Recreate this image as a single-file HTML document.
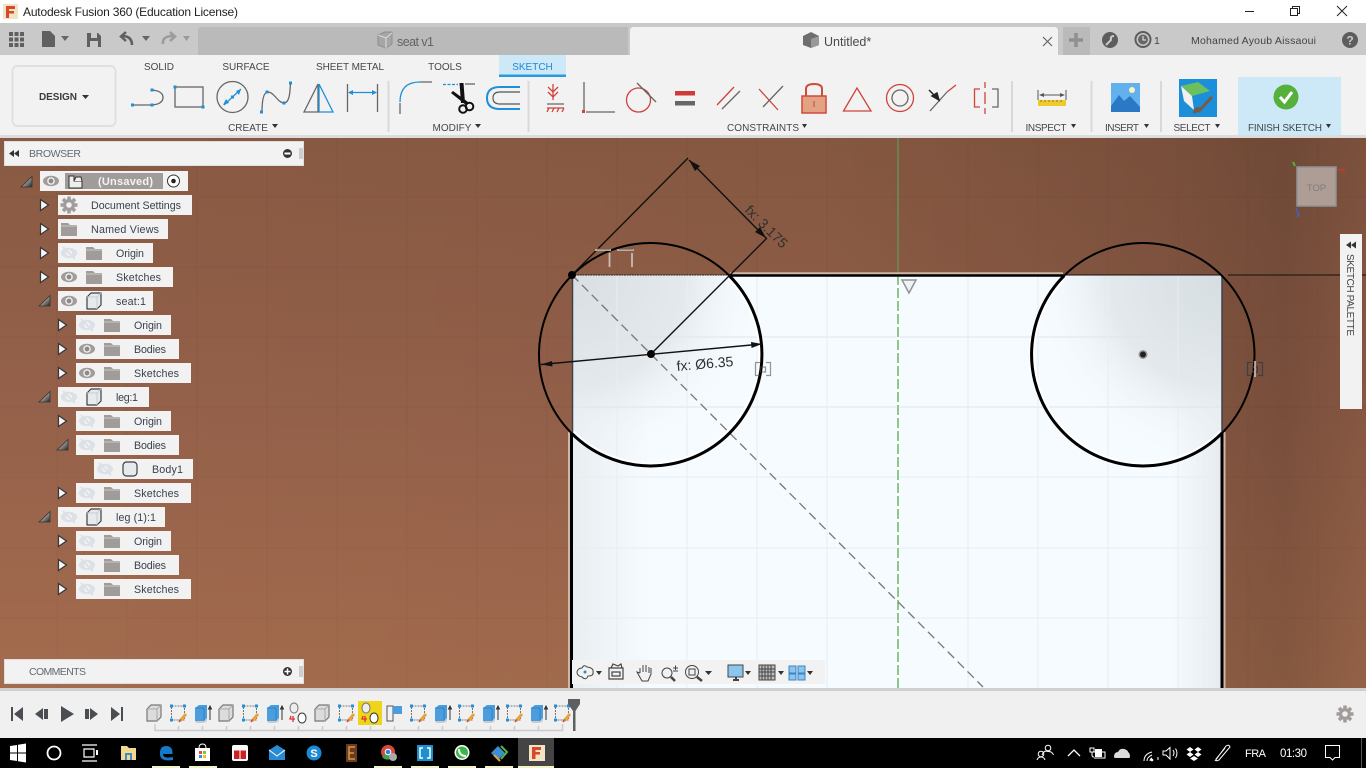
<!DOCTYPE html>
<html><head><meta charset="utf-8"><title>Autodesk Fusion 360 (Education License)</title>
<style>
html,body{margin:0;padding:0;width:1366px;height:768px;overflow:hidden;background:#fff}
svg{display:block}
text{font-family:"Liberation Sans",sans-serif;fill:#3d4145;font-size:11px}
.l{font-size:10px;fill:#44484c;text-anchor:middle}
.b{font-size:10.7px;fill:#37434f}
.t{fill:#fff;font-size:12px}
</style></head><body>
<svg width="1366" height="768" viewBox="0 0 1366 768" xmlns="http://www.w3.org/2000/svg">
<defs>
<linearGradient id="bgV" x1="0" y1="0" x2="0" y2="1"><stop offset="0" stop-color="#895a43"/><stop offset=".5" stop-color="#95614a"/><stop offset="1" stop-color="#a46c4e"/></linearGradient>
<linearGradient id="bgH" x1="0" y1="0" x2="1" y2="0"><stop offset="0" stop-color="#000" stop-opacity="0"/><stop offset=".6" stop-color="#000" stop-opacity=".03"/><stop offset=".85" stop-color="#000" stop-opacity=".12"/><stop offset=".94" stop-color="#000" stop-opacity=".19"/><stop offset="1" stop-color="#000" stop-opacity=".1"/></linearGradient>
<linearGradient id="plate" x1="0" y1="0" x2="1" y2="0"><stop offset="0" stop-color="#e9eef1"/><stop offset=".12" stop-color="#f5fbff"/><stop offset=".92" stop-color="#f6fbff"/><stop offset="1" stop-color="#e6ebef"/></linearGradient>
<radialGradient id="tl" gradientUnits="userSpaceOnUse" cx="572" cy="275" r="190"><stop offset="0" stop-color="#d8dee2"/><stop offset=".6" stop-color="#e3e9ec"/><stop offset="1" stop-color="#f3f9fd" stop-opacity="0"/></radialGradient>
<radialGradient id="tr" gradientUnits="userSpaceOnUse" cx="1222" cy="275" r="190"><stop offset="0" stop-color="#d6dde1"/><stop offset=".6" stop-color="#e3e9ec"/><stop offset="1" stop-color="#f3f9fd" stop-opacity="0"/></radialGradient>
<clipPath id="pc"><rect x="572" y="275" width="650" height="413"/></clipPath>
<linearGradient id="tg" x1="0" y1="0" x2="1" y2="1"><stop offset="0" stop-color="#fff"/><stop offset=".5" stop-color="#999"/><stop offset="1" stop-color="#222"/></linearGradient>

<g id="eye"><ellipse rx="8" ry="5.200" fill="#a09c9a"/><circle r="3.800" fill="#f2f2f2"/><circle r="2.400" fill="#8d8a88"/></g>
<g id="eyeoff"><ellipse rx="8" ry="5.200" fill="#dbe1e6"/><circle r="3" fill="#f2f2f2"/><path d="M-6-6 6 6" stroke="#dbe1e6" stroke-width="2"/></g>
<g id="folder"><path d="M-8-6H-1L1-4H8V7H-8Z" fill="#a09c9a"/><path d="M-8-3H8" stroke="#d6d4d3" stroke-width=".8"/></g>
<g id="ra"><path d="M-4-5.500 4 0-4 5.500Z" fill="#f8f8f8" stroke="#33363a" stroke-width="1.200"/></g>
<path id="oa" d="M-5.500 5 5.500-5.500V5Z" fill="url(#tg)" stroke="#333" stroke-width=".8"/>
<g id="cube"><path d="M-7-4-3-8H7V4L3 8H-7Z" fill="#e6eaed" stroke="#3c4146" stroke-width="1.200" stroke-linejoin="round"/><path d="M-7-4H3V8M3-4 7-8" fill="none" stroke="#c7ccd0" stroke-width="1"/></g>
<g id="tcube"><path d="M-7-4-3-8H7V4L3 8H-7Z" fill="#dcdcdc" stroke="#777" stroke-width="1.200"/><path d="M-7-4H3V8M3-4 7-8" fill="none" stroke="#aaa"/></g>
<g id="tsk"><rect x="-6.500" y="-7" width="13" height="14" fill="none" stroke="#555" stroke-width=".8" stroke-dasharray="2 1"/><g fill="#1e90d8"><rect x="-8" y="-8.500" width="3" height="3"/><rect x="5" y="-8.500" width="3" height="3"/><rect x="-8" y="5.500" width="3" height="3"/></g><path d="M2 8 8 1" stroke="#e8a33c" stroke-width="3"/><path d="M1 9 2.500 6.500" stroke="#c44" stroke-width="1.500"/></g>
<g id="tex"><path d="M-7-5-3-8H5V5L2 8H-7Z" fill="#4a9edd"/><path d="M-7-5H2V8" fill="none" stroke="#2a78b8" stroke-width=".7"/><path d="M-7 8H2L5 5V8L2 10H-6Z" fill="#ccc"/><path d="M8 7V-6M6.500-4 8-7 9.500-4Z" stroke="#333" fill="#333"/></g>
<g id="tj"><ellipse cx="-4" cy="-5" rx="4" ry="5" fill="#eee" stroke="#777"/><path d="M-7 3-8 6H-3M-5 3V9" stroke="#d33" stroke-width="1.300" fill="none"/><ellipse cx="4" cy="5" rx="4" ry="5" fill="#fff" stroke="#333"/></g>
<g id="gear"><path d="M0-8.500V8.500M-8.500 0H8.500M-6-6 6 6M-6 6 6-6" stroke="#a09c9a" stroke-width="3.500"/><circle r="6" fill="#a09c9a"/><circle r="2.800" fill="#f2f2f2"/></g>
<g id="sym"><path d="M-3-6.500H-7.500V6.500H-3M3-6.500H7.500V6.500H3M-2.500-2H2.500V3H-2.500Z" fill="none" stroke="#3f3f3f" stroke-width="1.200"/></g>
</defs>

<!-- window -->
<rect width="1366" height="768" fill="#fff"/>
<rect x="0" y="23" width="1366" height="32" fill="#c9c9c9"/>
<path d="M198 55V31Q198 27 202 27H628V55Z" fill="#b9bab9"/>
<path d="M630 55V31Q630 27 634 27H1054Q1058 27 1058 31V55Z" fill="#f2f2f2"/>
<path d="M1063 55V27H1090V55Z" fill="#b9bab9"/>
<rect x="0" y="55" width="1366" height="83" fill="#f2f2f2"/>

<!-- title -->
<rect x="3" y="4" width="15" height="15" fill="#f2e2c6"/>
<path d="M6 6H15V9H9V11H14V13.500H9V18H6Z" fill="#d8482b"/>
<text x="23" y="16" textLength="215" style="font-size:12px;fill:#222">Autodesk Fusion 360 (Education License)</text>
<path d="M1245 11.500H1254" stroke="#222"/>
<path d="M1290.500 8.500V15.500H1297.500V8.500ZM1292.500 8.500V6.500H1299.500V13.500H1297.500" fill="none" stroke="#222"/>
<path d="M1337 6 1347 16M1347 6 1337 16" stroke="#222"/>

<!-- toolbar top -->
<path d="M9 32h4v4H9zM14.500 32h4v4h-4zM20 32h4v4h-4zM9 37.500h4v4H9zM14.500 37.500h4v4h-4zM20 37.500h4v4h-4zM9 43h4v4H9zM14.500 43h4v4h-4zM20 43h4v4h-4z" fill="#606060"/>
<path d="M42 31H50L55 36V47H42Z" fill="#606060"/><path d="M61 36H69L65 41Z" fill="#666"/>
<path d="M87 33H98L101 36V47H87ZM91 33V38H97V33ZM90 41V47H98V41Z" fill="#606060" fill-rule="evenodd"/>
<path d="M132 45Q132 36 122 36M126 32 121 36.500 126 41" fill="none" stroke="#606060" stroke-width="2.500"/><path d="M142 36H150L146 41Z" fill="#666"/>
<path d="M163 44Q162 36 173 36M170 32 175 36.500 170 41" fill="none" stroke="#9b9b9b" stroke-width="2.500"/><path d="M183 36H190L186.500 41Z" fill="#999"/>
<path d="M378 35 385 32H392V44L386 48 378 45Z" fill="#a6a6a6" stroke="#8e8e8e"/><path d="M378 35 386 38V48M386 38 392 33" fill="none" stroke="#ddd"/>
<text x="397" y="46" textLength="37" style="font-size:12.500px;fill:#636363">seat v1</text>
<path d="M803 36 811 32 819 36V45L811 48 803 45Z" fill="#6e6e6e"/><path d="M811 39 819 36V45L811 48Z" fill="#999"/>
<text x="824" y="46" style="font-size:12.500px;fill:#4a4a4a">Untitled*</text>
<path d="M1043 37 1052 46M1052 37 1043 46" stroke="#666" stroke-width="1.200"/>
<path d="M1076 33V47M1069 40H1083" stroke="#8f8f8f" stroke-width="3.500"/>
<circle cx="1110" cy="40" r="8" fill="#5d5d5d"/><path d="M1106 45 1111 40Q1110 36 1114 36" stroke="#c9c9c9" stroke-width="2" fill="none"/>
<circle cx="1143" cy="39.500" r="7.500" fill="#c9c9c9" stroke="#5d5d5d" stroke-width="2"/><circle cx="1143" cy="39.500" r="5" fill="#666"/><path d="M1143 36V40H1146" stroke="#eee" fill="none"/>
<text x="1154" y="44" style="font-size:10.500px;fill:#444">1</text>
<text x="1191" y="44" textLength="125" style="font-size:10.500px;fill:#444">Mohamed Ayoub Aissaoui</text>
<circle cx="1350" cy="40" r="8" fill="#5d5d5d"/><text x="1350" y="44.500" text-anchor="middle" style="font-size:12px;font-weight:bold;fill:#c9c9c9">?</text>

<!-- ribbon -->
<rect x="12.500" y="66" width="103" height="60" rx="5" fill="#f2f2f2" stroke="#dde1e4" stroke-width="2"/>
<text x="39" y="100" textLength="38" style="font-size:10px;font-weight:bold;fill:#3c3c3c">DESIGN</text><path d="M82 95H89L85.500 99Z" fill="#333"/>
<text class="l" x="159" y="70">SOLID</text><text class="l" x="246" y="70">SURFACE</text><text class="l" x="350" y="70" textLength="68">SHEET METAL</text><text class="l" x="445" y="70">TOOLS</text>
<rect x="499" y="55" width="67" height="21" fill="#cde9f8"/><rect x="499" y="74.500" width="67" height="2.500" fill="#2a9ae0"/>
<text class="l" x="532.500" y="70" style="fill:#1a8bd6">SKETCH</text>

<g fill="none" stroke="#666" stroke-width="1.300">
<path d="M133 105H152M152 90Q163 91 163 97.500Q163 104 152 105"/>
<rect x="175" y="87" width="28" height="20"/>
<circle cx="232.500" cy="97" r="15.500"/>
<path d="M262 112Q262 92 268 92C274 92 278 103 284 103C290 103 290 90 290.500 83"/>
<path d="M304 112 318 84V112Z"/>
<path d="M347.500 84V112M377.500 84V112"/>
<path d="M420 82H432M400 103V114"/>
<path d="M465 84H475"/>
</g>
<g fill="#1e90d8"><rect x="131" y="103.500" width="3" height="3"/><rect x="150.500" y="103.500" width="3" height="3"/><rect x="150.500" y="88.500" width="3" height="3"/><rect x="173.500" y="85.500" width="3" height="3"/><rect x="201.500" y="105.500" width="3" height="3"/><rect x="231" y="95.500" width="3" height="3"/><rect x="260" y="110.500" width="3" height="3"/><rect x="265.500" y="90.500" width="3" height="3"/><rect x="282.500" y="101.500" width="3" height="3"/><rect x="289" y="81.500" width="3" height="3"/></g>
<g fill="none" stroke="#1e90d8" stroke-width="1.300">
<path d="M224 105 241 89"/>
<path d="M319 84V112H333Z"/>
<path d="M349 92.500H376"/>
<path d="M400 102Q400 82 420 82"/>
<path d="M443 84.500H458" stroke-dasharray="3 1.500"/>
<path d="M520 87H500Q487 87 487 98Q487 109 500 109H520" stroke-width="2"/>
</g>
<path d="M223 105 226 99 229 103ZM241 89 236 91 239 95ZM348 92.500 353 90V95ZM377 92.500 372 90V95Z" fill="#1e90d8"/>
<path d="M520 92H500Q493 92 493 98Q493 104 500 104H520" fill="none" stroke="#555" stroke-width="1.200"/>
<!-- scissors -->
<path d="M459.500 83 463.500 83 465 103 461 103Z" fill="#111"/><path d="M451 93 453 91 468 102 466 105Z" fill="#111"/>
<circle cx="463" cy="109" r="3.800" fill="none" stroke="#111" stroke-width="2"/><circle cx="469.500" cy="106.500" r="3.800" fill="none" stroke="#111" stroke-width="2"/>
<g fill="#d5d9dc"><rect x="387.500" y="81" width="2" height="51"/><rect x="527.500" y="81" width="2" height="51"/><rect x="1011" y="81" width="2" height="51"/><rect x="1090.500" y="81" width="2" height="51"/><rect x="1160" y="81" width="2" height="51"/></g>
<text class="l" x="248" y="131">CREATE</text><path d="M272 124H278L275 128Z" fill="#333"/>
<text class="l" x="452" y="131">MODIFY</text><path d="M475 124H481L478 128Z" fill="#333"/>
<text class="l" x="763" y="131" textLength="72">CONSTRAINTS</text><path d="M802 124H807L804.500 128Z" fill="#333"/>
<text class="l" x="1046" y="131" textLength="41">INSPECT</text><path d="M1071 124H1076L1073.500 128Z" fill="#333"/>
<text class="l" x="1122" y="131" textLength="34">INSERT</text><path d="M1144 124H1149L1146.500 128Z" fill="#333"/>
<text class="l" x="1192" y="131" textLength="37">SELECT</text><path d="M1215 124H1220L1217.500 128Z" fill="#333"/>
<rect x="1238" y="77" width="103" height="59" fill="#cde9f8"/>
<text class="l" x="1285" y="131" textLength="74">FINISH SKETCH</text><path d="M1326 124H1331L1328.500 128Z" fill="#333"/>

<!-- constraints icons -->
<g fill="none" stroke="#d0423a" stroke-width="1.300">
<path d="M553 84V100M548 87 553 92 558 87M548 92 553 97 558 92"/>
<path d="M547 108H564M549 108 547 112M554 108 552 112M559 108 557 112M564 108 562 112"/>
<circle cx="638.500" cy="100" r="12"/>
<path d="M717 105 734 87M759 89 778 110"/>
<path d="M843.500 111 857 88 871 111Z"/>
<circle cx="900" cy="98" r="13.500"/>
<path d="M947 92 956 85"/>
<path d="M980 89H974.500V107H980M985 82V88M985 92V104M985 108V114"/>
</g>
<g fill="none" stroke="#666" stroke-width="1.300">
<path d="M547 104H564"/>
<path d="M584 82V112M586 112H615"/>
<path d="M637 83 656 102"/>
<path d="M722 109 740 91M763 107 783 86"/>
<circle cx="900" cy="98" r="8"/>
<path d="M930 111 947 92"/>
<path d="M992 89H998V107H992"/>
</g>
<rect x="582" y="110" width="3" height="3" fill="#d0423a"/>
<rect x="675" y="91" width="20" height="4.500" fill="#cf3b36"/><rect x="675" y="101" width="20" height="4.500" fill="#666"/>
<rect x="802" y="96" width="24" height="17" fill="#e3a283" stroke="#cf4a3b" stroke-width="1.500"/><path d="M806 96V89Q806 84 814 84Q822 84 822 89V96" fill="none" stroke="#cf4a3b" stroke-width="2"/><path d="M814 101V107" stroke="#c44"/>
<path d="M929 90 937 98M932 96 939 100 937 93Z" stroke="#222" stroke-width="1.500" fill="#222"/>
<path d="M1038 90V100M1066 90V100M1040 95H1064" stroke="#555" fill="none"/><path d="M1039 95 1044 93V97ZM1065 95 1060 93V97Z" fill="#555"/>
<rect x="1038" y="100" width="28" height="6" fill="#eecb2a"/>
<path d="M1041 100v2M1045 100v2M1049 100v2M1053 100v2M1057 100v2M1061 100v2" stroke="#555" stroke-width=".7"/>
<rect x="1111" y="83" width="29" height="29" fill="#62b1ec"/>
<circle cx="1132" cy="90" r="3" fill="#f7f2c8"/><path d="M1111 112V106L1119 95 1124 101 1130 96 1140 107V112Z" fill="#2a78c6"/>
<rect x="1179" y="79" width="38" height="38" fill="#1b8fd9"/>
<path d="M1181 86 1198 82 1210 91 1192 96Z" fill="#6bbf5d"/><path d="M1181 86 1192 96 1194 110 1184 101Z" fill="#f0f0f0"/>
<path d="M1198 112 1212 97" stroke="#7b5a44" stroke-width="3"/><path d="M1193 114Q1193 107 1199 107Q1202 111 1193 114Z" fill="#7b5a44"/>
<circle cx="1286" cy="97" r="12.500" fill="#55b03c"/><path d="M1280 97 1284.500 102 1292 92" fill="none" stroke="#fff" stroke-width="3"/>

<rect x="0" y="135" width="1366" height="3" fill="#dcdcdc"/>

<!-- viewport -->
<rect x="0" y="138" width="1366" height="551" fill="url(#bgV)"/>
<rect x="0" y="138" width="1366" height="551" fill="url(#bgH)"/>
<g stroke="#000" stroke-opacity=".035" fill="none"><path d="M57 138V688M127 138V688M197 138V688M267 138V688M337 138V688M407 138V688M477 138V688M547 138V688M1248 138V688M1318 138V688M617 138V275M687 138V275M757 138V275M827 138V275M968 138V275M1038 138V275M1108 138V275M1178 138V275M0 197H1366M0 267H572M0 337H572M0 407H572M0 477H572M0 548H572M0 618H572M1222 337H1366M1222 407H1366M1222 477H1366M1222 548H1366M1222 618H1366"/></g>

<!-- plate -->
<rect x="572" y="275" width="650" height="413" fill="url(#plate)"/>
<g clip-path="url(#pc)"><circle cx="650.500" cy="354.500" r="111" fill="url(#tl)"/><circle cx="1143" cy="354.500" r="111" fill="url(#tr)"/></g>
<g stroke="#dfe4e8" fill="none"><path d="M572 337H1222M572 407H1222"/></g>
<g stroke="#e8edf1" fill="none"><path d="M617 275V688M687 275V688M757 275V688M827 275V688M968 275V688M1038 275V688M1108 275V688M1178 275V688M572 477H1222M572 548H1222M572 618H1222"/></g>

<!-- center axis -->
<path d="M898 138V275" stroke="#5aa85a" stroke-width="1"/>
<path d="M898 275V688" stroke="#fff" stroke-width="2.500"/>
<path d="M898 275V688" stroke="#66b566" stroke-width="1.500" stroke-dasharray="10 3"/>
<path d="M902 280H916L909 293Z" fill="#eef2f4" stroke="#8e9397" stroke-width="1.500"/>

<!-- construction dash -->
<path d="M572 275 983 687" stroke="#777" stroke-width="1.300" stroke-dasharray="9 5" fill="none"/>

<!-- edges -->
<path d="M730 273.500H1063" stroke="#cdb5a6" stroke-width="2.500"/>
<path d="M730 275.500H1063" stroke="#000" stroke-width="2.500"/>
<path d="M572 275H730" stroke="#222" stroke-width="1" stroke-dasharray="2 .6"/>
<path d="M1063 275H1222M1228 275H1366" stroke="#111" stroke-width="1"/>
<path d="M572.500 275V432M1222 275V432" stroke="#3e4347" stroke-width="1.500"/>
<path d="M569 432V688" stroke="#cfb7a8" stroke-width="2"/>
<path d="M571.500 432V688" stroke="#000" stroke-width="3"/>
<path d="M1224.500 432V688" stroke="#cfb7a8" stroke-width="2"/>
<path d="M1222 432V688" stroke="#000" stroke-width="3"/>

<!-- circles -->
<circle cx="650.500" cy="354.500" r="111.500" fill="none" stroke="#000" stroke-width="2"/>
<path d="M727.900 277.100A100 100 0 0 1 573.100 431.900" fill="none" stroke="#fff" stroke-width="3.500" opacity=".85"/>
<path d="M729.300 275.700A100 100 0 0 1 571.700 433.300" fill="none" stroke="#000" stroke-width="3"/>
<circle cx="1143" cy="354.500" r="111.500" fill="none" stroke="#000" stroke-width="2"/>
<path d="M1220.400 431.900A100 100 0 0 1 1065.600 277.100" fill="none" stroke="#fff" stroke-width="3.500" opacity=".85"/>
<path d="M1221.800 433.300A100 100 0 0 1 1064.200 275.700" fill="none" stroke="#000" stroke-width="3"/>

<!-- dimensions -->
<g fill="none" stroke="#111" stroke-width="1.400">
<path d="M572 275 688 158M730 275 767 238M651 354 730 275M689 160 766 238"/>
<path d="M541 364.500 762 344"/>
</g>
<path d="M689 160 700 166 695 171ZM766 238 755 232 760 227ZM541 364.500 552 361 552.500 366.500ZM762 344 751 342 751.500 348Z" fill="#111"/>
<circle cx="572" cy="275" r="4" fill="#000"/><circle cx="651" cy="354" r="4" fill="#000"/>
<circle cx="1143" cy="354.500" r="4.500" fill="#9a9a9a"/><circle cx="1143" cy="354.500" r="3" fill="#222"/>
<text transform="translate(744 211) rotate(45)" style="font-size:14px;fill:#2f2f2f">fx: 3.175</text>
<text transform="translate(677 371) rotate(-5)" style="font-size:14px;fill:#2f2f2f">fx: Ø6.35</text>
<!-- sketch glyphs -->
<g fill="none" stroke="#b8aba2" stroke-width="2"><path d="M595 250H611M617 250H634"/></g>
<g fill="none" stroke="#6b625c" stroke-width="1"><path d="M597 249H610M619 249H633"/></g>
<g fill="none" stroke="#c9bdb5" stroke-width="1.800"><path d="M609.500 253V267M632 253V267"/></g>
<use href="#sym" x="763" y="369" opacity=".55"/>
<use href="#sym" x="1255" y="369"/><path d="M1255 361V377" stroke="#d8c8be" stroke-width="1.500"/>

<!-- view cube -->
<rect x="1297" y="167" width="39" height="39" fill="#ae9d95" stroke="#8e9298" stroke-width="1.500"/>
<text x="1316.500" y="191" text-anchor="middle" style="font-size:9.500px;fill:#7d7d7d">TOP</text>
<path d="M1295 166 1293 162" stroke="#59b02c" stroke-width="2"/><path d="M1337 170H1342" stroke="#d33"/><path d="M1296 208 1299 216" stroke="#4a5fb0" stroke-width="1.500"/>
<text x="1341" y="173" style="font-size:7px;fill:#d33333">X</text><text x="1296" y="217" style="font-size:7px;fill:#4a5fb0">Z</text>

<!-- palette -->
<rect x="1340" y="234" width="22" height="175" fill="#f2f2f2"/>
<path d="M1346 245 1351 241.500V248.500ZM1351 245 1356 241.500V248.500Z" fill="#333"/>
<text transform="translate(1347 254) rotate(90)" textLength="82" style="font-size:10px;fill:#444">SKETCH PALETTE</text>

<!-- nav bar -->
<rect x="572" y="660" width="253" height="24" fill="#f2f2f2"/>
<g fill="none" stroke="#444" stroke-width="1">
<path d="M577 672Q578 668 582 668Q584 664 587 667Q594 668 593 672Q594 676 588 676Q586 681 582 677Q577 676 577 672Z"/>
<path d="M609 668H623V679H609ZM612 672H620V676H612ZM611 668 613 664 618 666 621 664 622 668" stroke-width="1.200"/>
<path d="M640 673V668M643 672V665M646 672V665M649 673V667M640 673 637 672 642 681H648L651 674V668"/>
<circle cx="667" cy="673" r="5"/><path d="M671 677 675 681" stroke-width="2.500"/><path d="M673 668H678M675.500 665.500V670M673 671H678"/>
<circle cx="692" cy="672" r="6.500"/><rect x="689" y="669" width="6" height="6"/><path d="M697 677 702 681" stroke-width="2.500"/>
<rect x="728" y="665" width="15" height="12" fill="#8cc6ee"/><path d="M733 680H739M736 677V680" stroke-width="2"/>
<rect x="759" y="665" width="16" height="15" fill="#bbb"/><path d="M762 665V680M765 665V680M768 665V680M771 665V680M759 669H775M759 672H775M759 676H775"/>
<g stroke="#3b84c4"><rect x="789" y="666" width="7" height="7" fill="#8cc6ee"/><rect x="798" y="666" width="7" height="7" fill="#8cc6ee"/><rect x="789" y="674" width="7" height="6" fill="#8cc6ee"/><rect x="798" y="674" width="7" height="6" fill="#8cc6ee"/></g>
</g>
<circle cx="585" cy="672" r="1.500" fill="#1e90d8"/>
<g fill="#333"><path d="M596 671H602L599 675ZM705 671H712L708.500 675ZM745 671H751L748 675ZM778 671H784L781 675ZM807 671H813L810 675Z"/></g>

<!-- browser panel -->
<rect x="4.500" y="141.500" width="299" height="24" fill="#f2f2f2" stroke="#dfdfdf"/>
<path d="M9 153.500 14 150V157ZM14 153.500 19 150V157Z" fill="#333"/>
<text x="29" y="157" textLength="52" style="font-size:10.500px;fill:#5f6a74">BROWSER</text>
<circle cx="287.500" cy="153.500" r="4.500" fill="#333"/><rect x="284.500" y="152.500" width="6" height="2" fill="#fff"/>
<path d="M300 148V159M302 148V159" stroke="#aaa"/>

<!-- tree -->
<use href="#oa" x="26.500" y="182"/>
<rect x="40" y="171" width="148" height="20" fill="#f2f2f2"/>
<use href="#eye" x="51" y="181"/>
<rect x="65" y="173" width="98" height="16" fill="#a09c9a"/>
<path d="M69 176H74V181H82V188H69Z" fill="#eee" stroke="#333"/><path d="M74 181 76 177H81L82 181" fill="#eee" stroke="#333"/>
<text x="98" y="185" textLength="55" style="font-size:11px;font-weight:bold;fill:#f4f4f4">(Unsaved)</text>
<circle cx="173.500" cy="181" r="6" fill="#fff" stroke="#333"/><circle cx="173.500" cy="181" r="2.300" fill="#222"/>

<use href="#ra" x="44.500" y="205"/><rect x="58" y="195" width="134" height="20" fill="#f2f2f2"/><use href="#gear" x="69" y="205"/><text class="b" x="91" y="209" textLength="90">Document Settings</text>
<use href="#ra" x="44.500" y="229"/><rect x="58" y="219" width="110" height="20" fill="#f2f2f2"/><use href="#folder" x="69" y="229"/><text class="b" x="91" y="233" textLength="68">Named Views</text>
<use href="#ra" x="44.500" y="253"/><rect x="58" y="243" width="95" height="20" fill="#f2f2f2"/><use href="#eyeoff" x="69" y="253"/><use href="#folder" x="94" y="253"/><text class="b" x="116" y="257" textLength="28">Origin</text>
<use href="#ra" x="44.500" y="277"/><rect x="58" y="267" width="115" height="20" fill="#f2f2f2"/><use href="#eye" x="69" y="277"/><use href="#folder" x="94" y="277"/><text class="b" x="116" y="281" textLength="45">Sketches</text>
<use href="#oa" x="44.500" y="301"/><rect x="58" y="291" width="95" height="20" fill="#f2f2f2"/><use href="#eye" x="69" y="301"/><use href="#cube" x="94" y="301"/><text class="b" x="116" y="305" textLength="30">seat:1</text>
<use href="#ra" x="62.500" y="325"/><rect x="76" y="315" width="95" height="20" fill="#f2f2f2"/><use href="#eyeoff" x="87" y="325"/><use href="#folder" x="112" y="325"/><text class="b" x="134" y="329" textLength="28">Origin</text>
<use href="#ra" x="62.500" y="349"/><rect x="76" y="339" width="103" height="20" fill="#f2f2f2"/><use href="#eye" x="87" y="349"/><use href="#folder" x="112" y="349"/><text class="b" x="134" y="353" textLength="32">Bodies</text>
<use href="#ra" x="62.500" y="373"/><rect x="76" y="363" width="115" height="20" fill="#f2f2f2"/><use href="#eye" x="87" y="373"/><use href="#folder" x="112" y="373"/><text class="b" x="134" y="377" textLength="45">Sketches</text>
<use href="#oa" x="44.500" y="397"/><rect x="58" y="387" width="91" height="20" fill="#f2f2f2"/><use href="#eyeoff" x="69" y="397"/><use href="#cube" x="94" y="397"/><text class="b" x="116" y="401" textLength="22">leg:1</text>
<use href="#ra" x="62.500" y="421"/><rect x="76" y="411" width="95" height="20" fill="#f2f2f2"/><use href="#eyeoff" x="87" y="421"/><use href="#folder" x="112" y="421"/><text class="b" x="134" y="425" textLength="28">Origin</text>
<use href="#oa" x="62.500" y="445"/><rect x="76" y="435" width="103" height="20" fill="#f2f2f2"/><use href="#eyeoff" x="87" y="445"/><use href="#folder" x="112" y="445"/><text class="b" x="134" y="449" textLength="32">Bodies</text>
<rect x="94" y="459" width="99" height="20" fill="#f2f2f2"/><use href="#eyeoff" x="105" y="469"/><rect x="123" y="462" width="14" height="14" rx="3.500" fill="#e6eaed" stroke="#3c4146" stroke-width="1.200"/><text class="b" x="152" y="473" textLength="31">Body1</text>
<use href="#ra" x="62.500" y="493"/><rect x="76" y="483" width="115" height="20" fill="#f2f2f2"/><use href="#eyeoff" x="87" y="493"/><use href="#folder" x="112" y="493"/><text class="b" x="134" y="497" textLength="45">Sketches</text>
<use href="#oa" x="44.500" y="517"/><rect x="58" y="507" width="107" height="20" fill="#f2f2f2"/><use href="#eyeoff" x="69" y="517"/><use href="#cube" x="94" y="517"/><text class="b" x="116" y="521" textLength="40">leg (1):1</text>
<use href="#ra" x="62.500" y="541"/><rect x="76" y="531" width="95" height="20" fill="#f2f2f2"/><use href="#eyeoff" x="87" y="541"/><use href="#folder" x="112" y="541"/><text class="b" x="134" y="545" textLength="28">Origin</text>
<use href="#ra" x="62.500" y="565"/><rect x="76" y="555" width="103" height="20" fill="#f2f2f2"/><use href="#eyeoff" x="87" y="565"/><use href="#folder" x="112" y="565"/><text class="b" x="134" y="569" textLength="32">Bodies</text>
<use href="#ra" x="62.500" y="589"/><rect x="76" y="579" width="115" height="20" fill="#f2f2f2"/><use href="#eyeoff" x="87" y="589"/><use href="#folder" x="112" y="589"/><text class="b" x="134" y="593" textLength="45">Sketches</text>

<!-- comments -->
<rect x="4.500" y="659.500" width="299" height="24" fill="#f2f2f2" stroke="#dfdfdf"/>
<text x="29" y="675" textLength="57" style="font-size:10.500px;fill:#5f6a74">COMMENTS</text>
<circle cx="287.500" cy="671.500" r="4.500" fill="#333"/><path d="M284.500 671.500H290.500M287.500 668.500V674.500" stroke="#fff" stroke-width="1.500"/>
<path d="M300 666V677M302 666V677" stroke="#aaa"/>

<!-- timeline -->
<rect x="0" y="688" width="1366" height="50" fill="#f0f0f0"/>
<rect x="0" y="688" width="1366" height="3" fill="#cfcfcf"/>
<g fill="#4a4d52">
<path d="M11 707H13V721H11ZM14 714 23 707V721Z"/>
<path d="M35 714 43 708V720ZM44 709H48V719H44Z"/>
<path d="M61 706 74 714 61 722Z"/>
<path d="M85 709H89V719H85ZM90 708 98 714 90 720Z"/>
<path d="M111 707 120 714 111 721ZM121 707H123V721H121Z"/>
</g>
<rect x="358" y="701" width="24" height="24" fill="#efd51a"/>
<use href="#tcube" x="154" y="713"/><use href="#tsk" x="178" y="713"/><use href="#tex" x="202" y="713"/><use href="#tcube" x="226" y="713"/><use href="#tsk" x="250" y="713"/><use href="#tex" x="274" y="713"/><use href="#tj" x="298" y="713"/><use href="#tcube" x="322" y="713"/><use href="#tsk" x="346" y="713"/><use href="#tj" x="370" y="713"/>
<rect x="387" y="706" width="6" height="15" fill="#f2f2f2" stroke="#555"/><rect x="393" y="706" width="9" height="8" fill="#4a9edd"/>
<use href="#tsk" x="418" y="713"/><use href="#tex" x="442" y="713"/><use href="#tsk" x="466" y="713"/><use href="#tex" x="490" y="713"/><use href="#tsk" x="514" y="713"/><use href="#tex" x="538" y="713"/><use href="#tsk" x="562" y="713"/>
<path d="M155 724V730.500H562.500V724M178.500 726V730M202.500 726V730M226.500 726V730M250.500 726V730M274.500 726V730M298.500 726V730M322.500 726V730M346.500 726V730M370.500 726V730M394.500 726V730M418.500 726V730M442.500 726V730M466.500 726V730M490.500 726V730M514.500 726V730M538.500 726V730" fill="none" stroke="#cbcbcb" stroke-width="1.500"/>
<path d="M568 699H580V704L575.500 711V731H573V711L568 704Z" fill="#5c5f63"/>
<g transform="translate(1345 714)"><path d="M0-8.500V8.500M-8.500 0H8.500M-6-6 6 6M-6 6 6-6" stroke="#a09c9a" stroke-width="3.500"/><circle r="6" fill="#a09c9a"/><circle r="2.800" fill="#f0f0f0"/></g>

<!-- taskbar -->
<rect x="0" y="738" width="1366" height="30" fill="#000"/>
<rect x="518" y="738" width="36" height="30" fill="#444"/>
<path d="M10 746 17 745V752.500H10ZM18 744.800 26 743.500V752.500H18ZM10 753.500H17V761L10 760ZM18 753.500H26V762.500L18 761.200Z" fill="#fff"/>
<circle cx="54" cy="753" r="6.500" fill="none" stroke="#fff" stroke-width="1.800"/>
<path d="M82 745H97M82 761H97M84 749H94V757H84Z" fill="none" stroke="#fff" stroke-width="1.200"/><rect x="96" y="750" width="2" height="5" fill="#fff"/>
<path d="M121 746H127L129 748H136V760H121Z" fill="#f2d98b"/><path d="M126 760V754H131V760" fill="none" stroke="#3a8fd0" stroke-width="2"/>
<path d="M160 753Q160 746 166 746Q173 746 172.500 754H163Q163 759 173 757V760Q159 762 160 753Z" fill="#1579c9"/>
<rect x="195" y="748" width="15" height="13" fill="#fff"/><path d="M199 748Q199 744 202.500 744Q206 744 206 748" fill="none" stroke="#fff"/><rect x="199" y="751" width="3" height="3" fill="#e44"/><rect x="203" y="751" width="3" height="3" fill="#7c3"/><rect x="199" y="755" width="3" height="3" fill="#29d"/><rect x="203" y="755" width="3" height="3" fill="#fb2"/>
<rect x="232" y="745" width="16" height="16" rx="2" fill="#fff"/><rect x="234" y="750" width="12" height="9" fill="#c22"/><path d="M240 745V761M233 750H247" stroke="#fff"/>
<path d="M269 750 277 745 285 750V760H269Z" fill="#2a8bd2"/><path d="M269 750 277 756 285 750" fill="none" stroke="#fff"/>
<circle cx="314" cy="753" r="7.500" fill="#1a8ad4"/><text x="314" y="757" text-anchor="middle" style="font-size:11px;font-weight:bold;fill:#fff">S</text>
<rect x="346" y="744" width="11" height="18" fill="#6a3a24"/><path d="M355 747H349V759H355M349 753H354" fill="none" stroke="#d89a3a" stroke-width="1.500"/>
<circle cx="388" cy="752" r="7" fill="#d8493c"/><path d="M388 752 382 757A7 7 0 0 0 393 757Z" fill="#3ea34a"/><circle cx="388" cy="752" r="2.800" fill="#2b84d8" stroke="#fff"/><circle cx="393" cy="757" r="4" fill="#aaa"/>
<rect x="417" y="745" width="16" height="16" fill="#1b8fd0"/><path d="M423 748H420V758H423M427 748H430V758H427" fill="none" stroke="#fff" stroke-width="1.500"/>
<circle cx="462" cy="752.500" r="7.500" fill="#fff"/><circle cx="462" cy="752.500" r="6" fill="#3eb54a"/><path d="M459 749Q459 756 466 756" stroke="#fff" stroke-width="2" fill="none"/>
<path d="M498 746 491 753 498 760 505 753Z" fill="#3a8fd0"/><path d="M501 746 507 752 501 759" fill="none" stroke="#5fb04a" stroke-width="2"/><path d="M494 755 500 761" stroke="#e8a33c" stroke-width="2"/>
<rect x="529" y="745" width="16" height="16" fill="#f2e2c6"/><path d="M532 747H541V750H535.500V752H540V754.500H535.500V759H532Z" fill="#d8482b"/>
<g fill="#f2f2c8"><rect x="152" y="766" width="28" height="2"/><rect x="189" y="766" width="28" height="2"/><rect x="374" y="766" width="28" height="2"/><rect x="411" y="766" width="28" height="2"/><rect x="448" y="766" width="28" height="2"/><rect x="485" y="766" width="28" height="2"/><rect x="518" y="766" width="36" height="2"/></g>

<!-- tray -->
<g fill="none" stroke="#fff" stroke-width="1">
<circle cx="1048" cy="748" r="2.800"/><path d="M1042 755Q1044 750 1048 751.500Q1052 751 1053.500 755"/><circle cx="1041" cy="754" r="2.800"/><path d="M1037 760Q1038 757 1041 757Q1044 757 1045 760"/>
<path d="M1068 756 1074 750 1080 756" stroke-width="1.300"/>
<path d="M1090 748V752H1094V748ZM1092 752V755Q1092 757 1094 757M1094 752H1105V758H1094"/>
<path d="M1158 757V760M1144 761Q1144 754 1152 752M1147 761Q1147 757 1152 755M1150 761Q1150 759 1152 758"/>
<path d="M1163 751H1166L1170 747.500V759L1166 755H1163ZM1173 750Q1175 753 1173 756M1175.500 748.500Q1178.500 753 1175.500 758"/>
<path d="M1215 761 1226 746Q1229 744 1230 747L1219 760Q1216 762 1216 759L1225 748"/>
<path d="M1325.500 745.500H1339.500V757.500H1335L1332.500 760 1330 757.500H1325.500Z"/>
</g>
<rect x="1095" y="749" width="7" height="8" fill="#fff"/>
<path d="M1114 757Q1114 752 1118 752Q1120 748 1124 749Q1128 750 1128 752Q1130 753 1130 757Q1130 758 1128 758H1116Q1114 758 1114 757Z" fill="#ddd"/>
<circle cx="1152" cy="760" r="1.300" fill="#fff"/>
<path d="M1190 747 1193.500 749.500 1190 752 1186.500 749.500ZM1198 747 1201.500 749.500 1198 752 1194.500 749.500ZM1190 752 1193.500 754.500 1190 757 1186.500 754.500ZM1198 752 1201.500 754.500 1198 757 1194.500 754.500ZM1194 756 1198 758.500 1194 761 1190 758.500Z" fill="#fff"/>
<text x="1245" y="757" textLength="21" style="fill:#fff;font-size:11px">FRA</text>
<text x="1280" y="757" textLength="27" style="fill:#fff;font-size:11.500px">01:30</text>
<rect x="1361" y="738" width="1" height="30" fill="#555"/>
</svg>
</body></html>
